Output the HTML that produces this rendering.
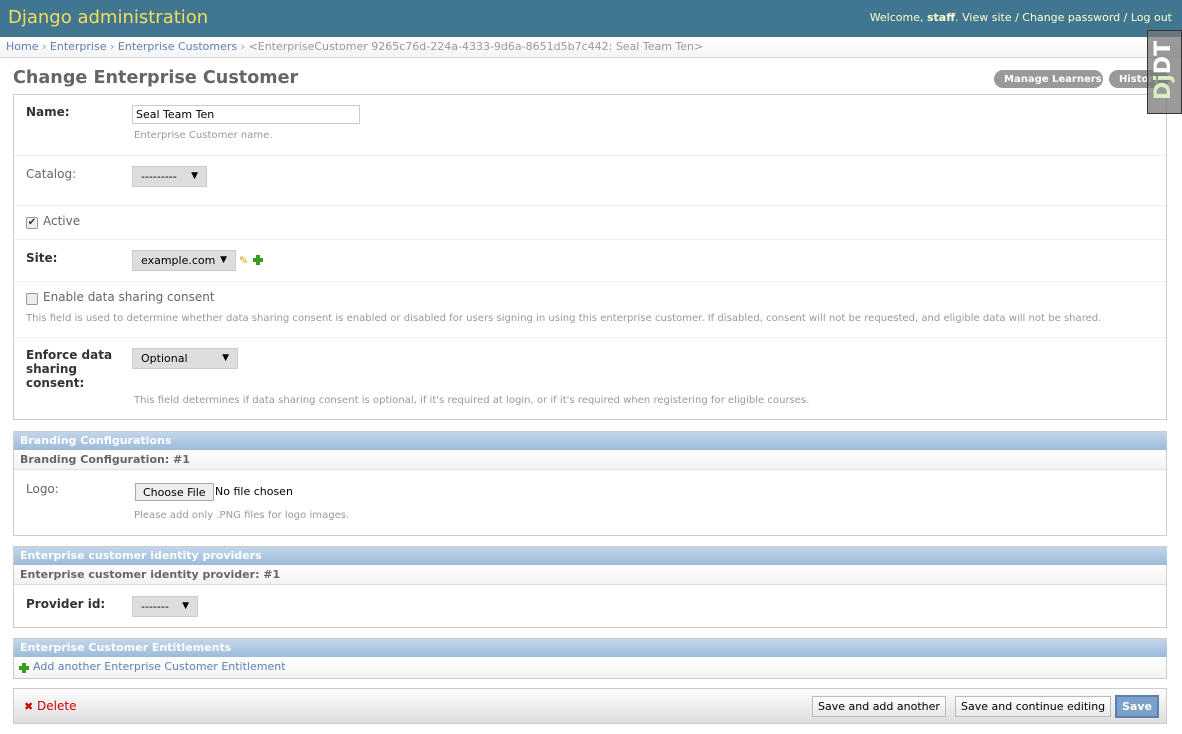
<!DOCTYPE html>
<html><head><meta charset="utf-8"><style>
*{box-sizing:border-box}
body{margin:0;width:1182px;height:734px;overflow:hidden;background:#fff;font-family:"DejaVu Sans","Liberation Sans",sans-serif;font-size:12px;color:#333;position:relative}
.a{position:absolute;white-space:nowrap}
a{color:#5b80b2;text-decoration:none}
.hdr{left:0;top:0;width:1182px;height:37px;background:#417690}
.bc{left:0;top:37px;width:1182px;height:21px;background:linear-gradient(#fff,#f4f4f4);border-bottom:1px solid #ddd}
.box{border:1px solid #ccc}
.row{position:absolute;left:0;width:1152px;border-bottom:1px solid #eee}
.lbl{font-weight:bold;color:#333}
.help{color:#999;font-size:10.05px}
.sel{background:#ddd;border:1px solid #ccc;height:21px;font-size:11px;color:#000;padding:3px 0 0 8px}
.sel:after{content:"▼";position:absolute;right:8px;top:4px;font-size:9px}
.mh{background:linear-gradient(#c3d6ea,#9cbbda);color:#fff;font-weight:bold;font-size:11px;height:18px;padding:2px 6px;width:1153px}
.sh{background:linear-gradient(#fff,#f2f2f2);color:#666;font-weight:bold;font-size:11px;height:20px;padding:3px 6px;border-bottom:1px solid #ddd;width:1152px}
.btn{background:linear-gradient(#fff,#e8e8e8);border:1px solid #bbb;font-size:11px;color:#000;height:21px;padding:3px 5px}
.pill{background:#999;color:#fff;font-weight:bold;font-size:10px;border-radius:10px;height:18px;padding:3px 10px;line-height:13px}
.plus{position:absolute;width:10px;height:10px}
.plus:before{content:"";position:absolute;left:3px;top:0;width:4px;height:10px;background:#3a9d1e}
.plus:after{content:"";position:absolute;left:0;top:3px;width:10px;height:4px;background:#3a9d1e}
</style></head><body>
<div class="a hdr"></div>
<div class="a" style="left:8px;top:7px;font-size:18px;color:#f5dd5d">Django administration</div>
<div class="a" style="right:10px;top:11px;font-size:11px;color:#ffc">Welcome, <b>staff</b>. View site / Change password / Log out</div>
<div class="a bc"></div>
<div class="a" style="left:6px;top:40px;font-size:11px;color:#999"><a>Home</a> › <a>Enterprise</a> › <a>Enterprise Customers</a> › &lt;EnterpriseCustomer 9265c76d-224a-4333-9d6a-8651d5b7c442: Seal Team Ten&gt;</div>
<div class="a" style="left:13px;top:68px;font-size:17.6px;font-weight:bold;color:#666">Change Enterprise Customer</div>
<div class="a pill" style="left:994px;top:70px;width:109px">Manage Learners</div>
<div class="a pill" style="left:1109px;top:70px;width:60px">History</div>

<div class="a box" style="left:13px;top:94px;width:1154px;height:326px">
 <div class="row" style="top:0;height:61px"><div class="a lbl" style="left:12px;top:10px">Name:</div>
  <div class="a" style="left:118px;top:10px;width:228px;height:19px;border:1px solid #ccc;padding:2px 3px;font-size:11px;color:#000">Seal Team Ten</div>
  <div class="a help" style="left:120px;top:35px">Enterprise Customer name.</div></div>
 <div class="row" style="top:61px;height:50px"><div class="a" style="left:12px;top:11px;color:#666">Catalog:</div><div class="a sel" style="left:118px;top:10px;width:75px">---------</div></div>
 <div class="row" style="top:111px;height:34px"><div class="a" style="left:12px;top:11px;width:12px;height:12px;border:1px solid #999;border-radius:2px;background:#eee;font-size:10px;line-height:10px;text-align:center">✔</div><div class="a" style="left:29px;top:8px;color:#666">Active</div></div>
 <div class="row" style="top:145px;height:42px"><div class="a lbl" style="left:12px;top:11px">Site:</div><div class="a sel" style="left:118px;top:10px;width:104px">example.com</div>
  <div class="a" style="left:225px;top:14px;font-size:11px;color:#d9a000">✎</div><div class="plus" style="left:239px;top:15px"></div></div>
 <div class="row" style="top:187px;height:56px"><div class="a" style="left:12px;top:11px;width:12px;height:12px;border:1px solid #999;border-radius:2px;background:#eee"></div><div class="a" style="left:29px;top:8px;color:#666">Enable data sharing consent</div>
  <div class="a help" style="left:12px;top:31px">This field is used to determine whether data sharing consent is enabled or disabled for users signing in using this enterprise customer. If disabled, consent will not be requested, and eligible data will not be shared.</div></div>
 <div class="row" style="top:243px;height:82px;border:0"><div class="a lbl" style="left:12px;top:10px;line-height:14px;white-space:normal;width:95px">Enforce data sharing consent:</div><div class="a sel" style="left:118px;top:10px;width:106px">Optional</div>
  <div class="a help" style="left:120px;top:57px">This field determines if data sharing consent is optional, if it's required at login, or if it's required when registering for eligible courses.</div></div>
</div>

<div class="a box" style="left:13px;top:431px;width:1154px;height:105px">
 <div class="mh">Branding Configurations</div><div class="sh">Branding Configuration: #1</div>
 <div class="a" style="left:12px;top:50px;color:#666">Logo:</div>
 <div class="a" style="left:121px;top:51px;border:1px solid #aaa;background:#eee;font-size:11px;padding:2px 7px;color:#000;height:18px">Choose File</div>
 <div class="a" style="left:201px;top:53px;font-size:11px;color:#000">No file chosen</div>
 <div class="a help" style="left:120px;top:78px">Please add only .PNG files for logo images.</div>
</div>

<div class="a box" style="left:13px;top:546px;width:1154px;height:82px">
 <div class="mh">Enterprise customer identity providers</div><div class="sh">Enterprise customer identity provider: #1</div>
 <div class="a lbl" style="left:12px;top:50px">Provider id:</div><div class="a sel" style="left:118px;top:49px;width:66px">-------</div>
</div>

<div class="a box" style="left:13px;top:638px;width:1154px;height:41px">
 <div class="mh">Enterprise Customer Entitlements</div>
 <div style="height:21px;background:linear-gradient(#fff,#f4f4f4);padding:3px 5px 3px 19px;font-size:11px;position:relative"><div class="plus" style="left:5px;top:6px"></div><a>Add another Enterprise Customer Entitlement</a></div>
</div>

<div class="a box" style="left:13px;top:688px;width:1154px;height:36px;background:linear-gradient(#fff,#ddd)">
 <div class="a" style="left:10px;top:10px;color:#c00"><span style="font-size:11px">✖</span> Delete</div>
 <div class="a btn" style="left:798px;top:7px;width:134px">Save and add another</div>
 <div class="a btn" style="left:941px;top:7px;width:156px">Save and continue editing</div>
 <div class="a" style="left:1101px;top:6px;width:44px;height:23px;background:#7ca0c7;border:2px solid #5b80b2;color:#fff;font-weight:bold;font-size:11px;padding:3px 0;text-align:center">Save</div>
</div>

<div class="a" style="left:1147px;top:30px;width:35px;height:84px;border:1px solid #333;background:rgba(120,120,120,.75)"></div>
<div class="a" style="left:1149px;top:100px;transform:rotate(-90deg);transform-origin:0 0;font-weight:bold;font-size:22px;line-height:30px;color:#fff"><span style="color:#d8f0c0">Dj</span>DT</div>
</body></html>
